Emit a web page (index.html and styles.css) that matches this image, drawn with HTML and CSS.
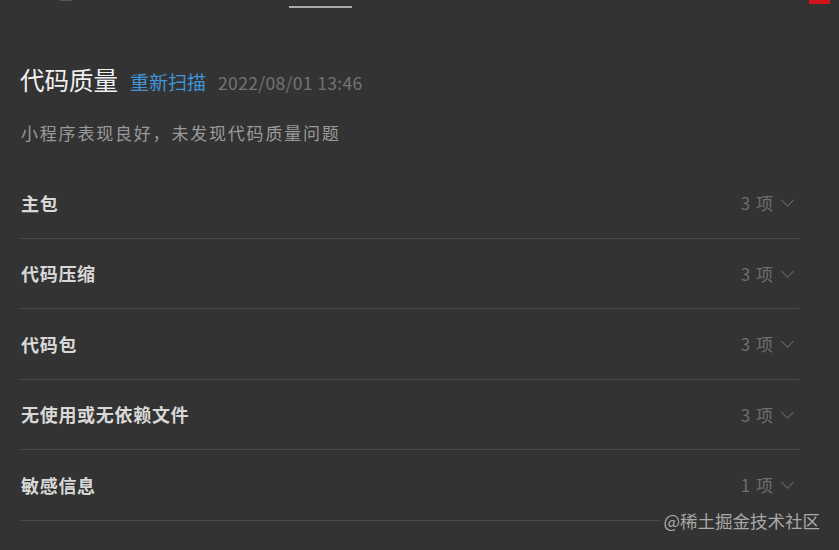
FILE: index.html
```html
<!DOCTYPE html>
<html lang="zh-CN">
<head>
    <meta charset="UTF-8">
    <meta name="viewport" content="width=device-width, initial-scale=1.0">
    <title>代码质量</title>
    <link rel="stylesheet" href="styles.css">
</head>
<body>
    <div class="topbar">
        <span class="tick"></span>
        <span class="tab-line"></span>
        <span class="close-mark"></span>
    </div>
    <div class="panel">
        <div class="head">
            <h2>代码质量</h2>
            <a class="rescan" href="#">重新扫描</a>
            <span class="date">2022/08/01 13:46</span>
        </div>
        <p class="summary">小程序表现良好，未发现代码质量问题</p>
        <ul class="groups">
            <li><span class="name">主包</span><span class="count">3 项<i class="chev"></i></span></li>
            <li><span class="name">代码压缩</span><span class="count">3 项<i class="chev"></i></span></li>
            <li><span class="name">代码包</span><span class="count">3 项<i class="chev"></i></span></li>
            <li><span class="name">无使用或无依赖文件</span><span class="count">3 项<i class="chev"></i></span></li>
            <li><span class="name">敏感信息</span><span class="count">1 项<i class="chev"></i></span></li>
        </ul>
    </div>
    <div class="watermark">@稀土掘金技术社区</div>
</body>
</html>
```

FILE: styles.css
```css
body, html {
    margin: 0;
    height: 100%;
    background-color: #333333;
    font-family: "Noto Sans CJK SC", "Noto Sans", sans-serif;
    overflow: hidden;
}
.topbar {
    position: relative;
    height: 8px;
}
.tick {
    position: absolute;
    left: 60px;
    top: 0;
    width: 12px;
    height: 1px;
    background: #555;
}
.tab-line {
    position: absolute;
    left: 289px;
    top: 6px;
    width: 63px;
    height: 2px;
    background: #aaa;
}
.close-mark {
    position: absolute;
    left: 809px;
    top: 0;
    width: 21px;
    height: 4px;
    background: #d0121b;
}
.panel {
    padding: 56px 40px 0 20px;
}
.head {
    display: flex;
    align-items: baseline;
}
.head h2 {
    margin: 0;
    font-size: 24.5px;
    font-weight: 400;
    color: #f0f0f0;
    line-height: 32px;
}
.rescan {
    margin-left: 12px;
    font-size: 19px;
    color: #3f95d6;
    text-decoration: none;
}
.date {
    margin-left: 12px;
    font-size: 17.5px;
    color: #737373;
    letter-spacing: 0.35px;
}
.summary {
    margin: 25px 0 0 1px;
    font-size: 17px;
    letter-spacing: 1.8px;
    color: #9a9a9a;
    line-height: 24px;
}
.groups {
    list-style: none;
    margin: 23px 0 0 0;
    padding: 0;
}
.groups li {
    display: flex;
    align-items: center;
    justify-content: space-between;
    height: 69.5px;
    border-bottom: 1px solid #4a4a4a;
    padding-left: 1px;
}
.name {
    font-size: 18px;
    font-weight: 700;
    letter-spacing: 0.7px;
    color: #d8d8d8;
}
.count {
    display: flex;
    align-items: center;
    font-size: 17px;
    letter-spacing: 1px;
    color: #6e6e6e;
    padding-right: 7px;
}
.chev {
    display: inline-block;
    width: 8px;
    height: 8px;
    border-right: 1.5px solid #6a6a6a;
    border-bottom: 1.5px solid #6a6a6a;
    transform: rotate(45deg);
    margin: -4px 0 0 9px;
}
.watermark {
    position: absolute;
    right: 19px;
    bottom: 17px;
    font-size: 17.5px;
    color: #a8a8a8;
    background: #333333;
    padding-left: 2px;
}
```
